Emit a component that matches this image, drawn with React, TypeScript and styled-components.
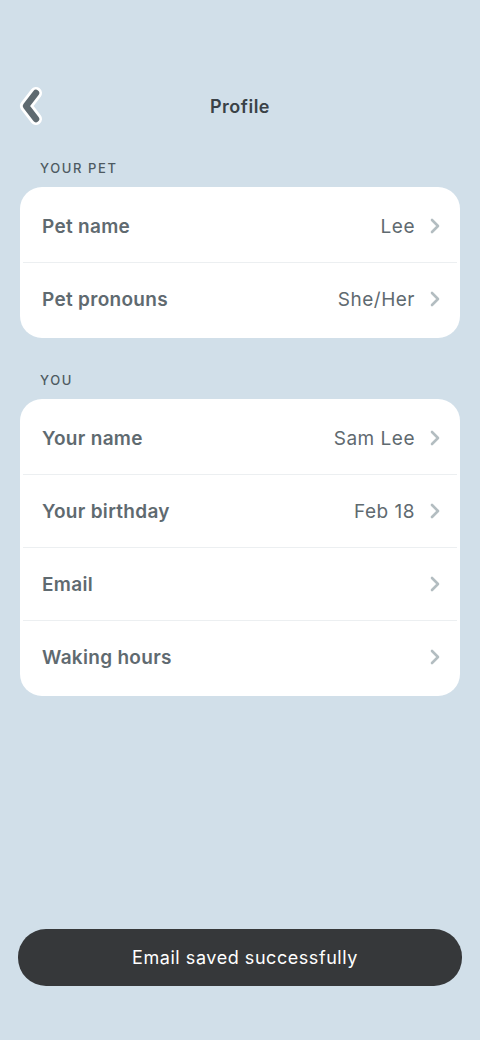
import React from "react";
import styled, { createGlobalStyle } from "styled-components";

const Global = createGlobalStyle`
  html, body { margin: 0; padding: 0; background: #d1dfe9; }
  body { font-family: "Inter", "Noto Sans", sans-serif; -webkit-font-smoothing: antialiased; }
`;

const Page = styled.div`
  min-height: 1040px;
  background: #d1dfe9;
  padding: 76px 20px 0;
  box-sizing: border-box;
  display: flex;
  flex-direction: column;
`;

const Header = styled.header`
  position: relative;
  height: 60px;
  display: flex;
  align-items: center;
  justify-content: center;
`;

const BackButton = styled.button`
  position: absolute;
  left: -3px;
  top: 50%;
  transform: translateY(-50%);
  width: 30px;
  height: 42px;
  padding: 0;
  border: none;
  background: none;
  display: flex;
  align-items: center;
  justify-content: center;
`;

const Title = styled.h1`
  margin: 0;
  font-size: 18px;
  font-weight: 600;
  letter-spacing: 0.5px;
  color: #3a4247;
`;

const SectionLabel = styled.div<{ $top: number }>`
  margin: ${(p) => p.$top}px 0 11px 20px;
  font-size: 13px;
  line-height: 16px;
  font-weight: 500;
  letter-spacing: 1.6px;
  color: #4e5a61;
`;

const Card = styled.div`
  background: #ffffff;
  border-radius: 22px;
  padding: 3px;
  display: flex;
  flex-direction: column;
`;

const Row = styled.div`
  height: 72px;
  display: flex;
  align-items: center;
  padding: 0 16px 0 19px;
  & + & {
    border-top: 1px solid #eceff1;
  }
`;

const RowLabel = styled.span`
  flex: 1;
  font-size: 19px;
  font-weight: 600;
  letter-spacing: 0.3px;
  color: #5f6a70;
`;

const RowValue = styled.span`
  font-size: 19px;
  font-weight: 400;
  letter-spacing: 0.5px;
  color: #5f6a70;
  margin-right: 14px;
`;

const Toast = styled.div`
  position: fixed;
  left: 18px;
  right: 18px;
  bottom: 54px;
  height: 57px;
  border-radius: 28px;
  background: #36383a;
  color: #ffffff;
  display: flex;
  align-items: center;
  justify-content: center;
  font-size: 18px;
  font-weight: 400;
  letter-spacing: 0.55px;
  padding-left: 10px;
`;

const Chevron = () => (
  <svg width="12" height="18" viewBox="0 0 12 18">
    <path d="M3 3 L9 9 L3 15" fill="none" stroke="#b3bdc1" strokeWidth="2.6" strokeLinecap="round" strokeLinejoin="round" />
  </svg>
);

const BackIcon = () => (
  <svg width="30" height="42" viewBox="0 0 30 42">
    <path d="M19 8 L9 21 L19 34" fill="none" stroke="#ffffff" strokeWidth="12" strokeLinecap="round" strokeLinejoin="round" />
    <path d="M19 8 L9 21 L19 34" fill="none" stroke="#5f6a70" strokeWidth="6.5" strokeLinecap="round" strokeLinejoin="round" />
  </svg>
);

type Item = { label: string; value?: string };

const pet: Item[] = [
  { label: "Pet name", value: "Lee" },
  { label: "Pet pronouns", value: "She/Her" },
];

const you: Item[] = [
  { label: "Your name", value: "Sam Lee" },
  { label: "Your birthday", value: "Feb 18" },
  { label: "Email" },
  { label: "Waking hours" },
];

const Section = ({ items }: { items: Item[] }) => (
  <Card>
    {items.map((it) => (
      <Row key={it.label}>
        <RowLabel>{it.label}</RowLabel>
        {it.value && <RowValue>{it.value}</RowValue>}
        <Chevron />
      </Row>
    ))}
  </Card>
);

export default function App() {
  return (
    <>
      <Global />
      <Page>
        <Header>
          <BackButton aria-label="Back">
            <BackIcon />
          </BackButton>
          <Title>Profile</Title>
        </Header>
        <SectionLabel $top={24}>YOUR PET</SectionLabel>
        <Section items={pet} />
        <SectionLabel $top={34}>YOU</SectionLabel>
        <Section items={you} />
        <Toast>Email saved successfully</Toast>
      </Page>
    </>
  );
}
